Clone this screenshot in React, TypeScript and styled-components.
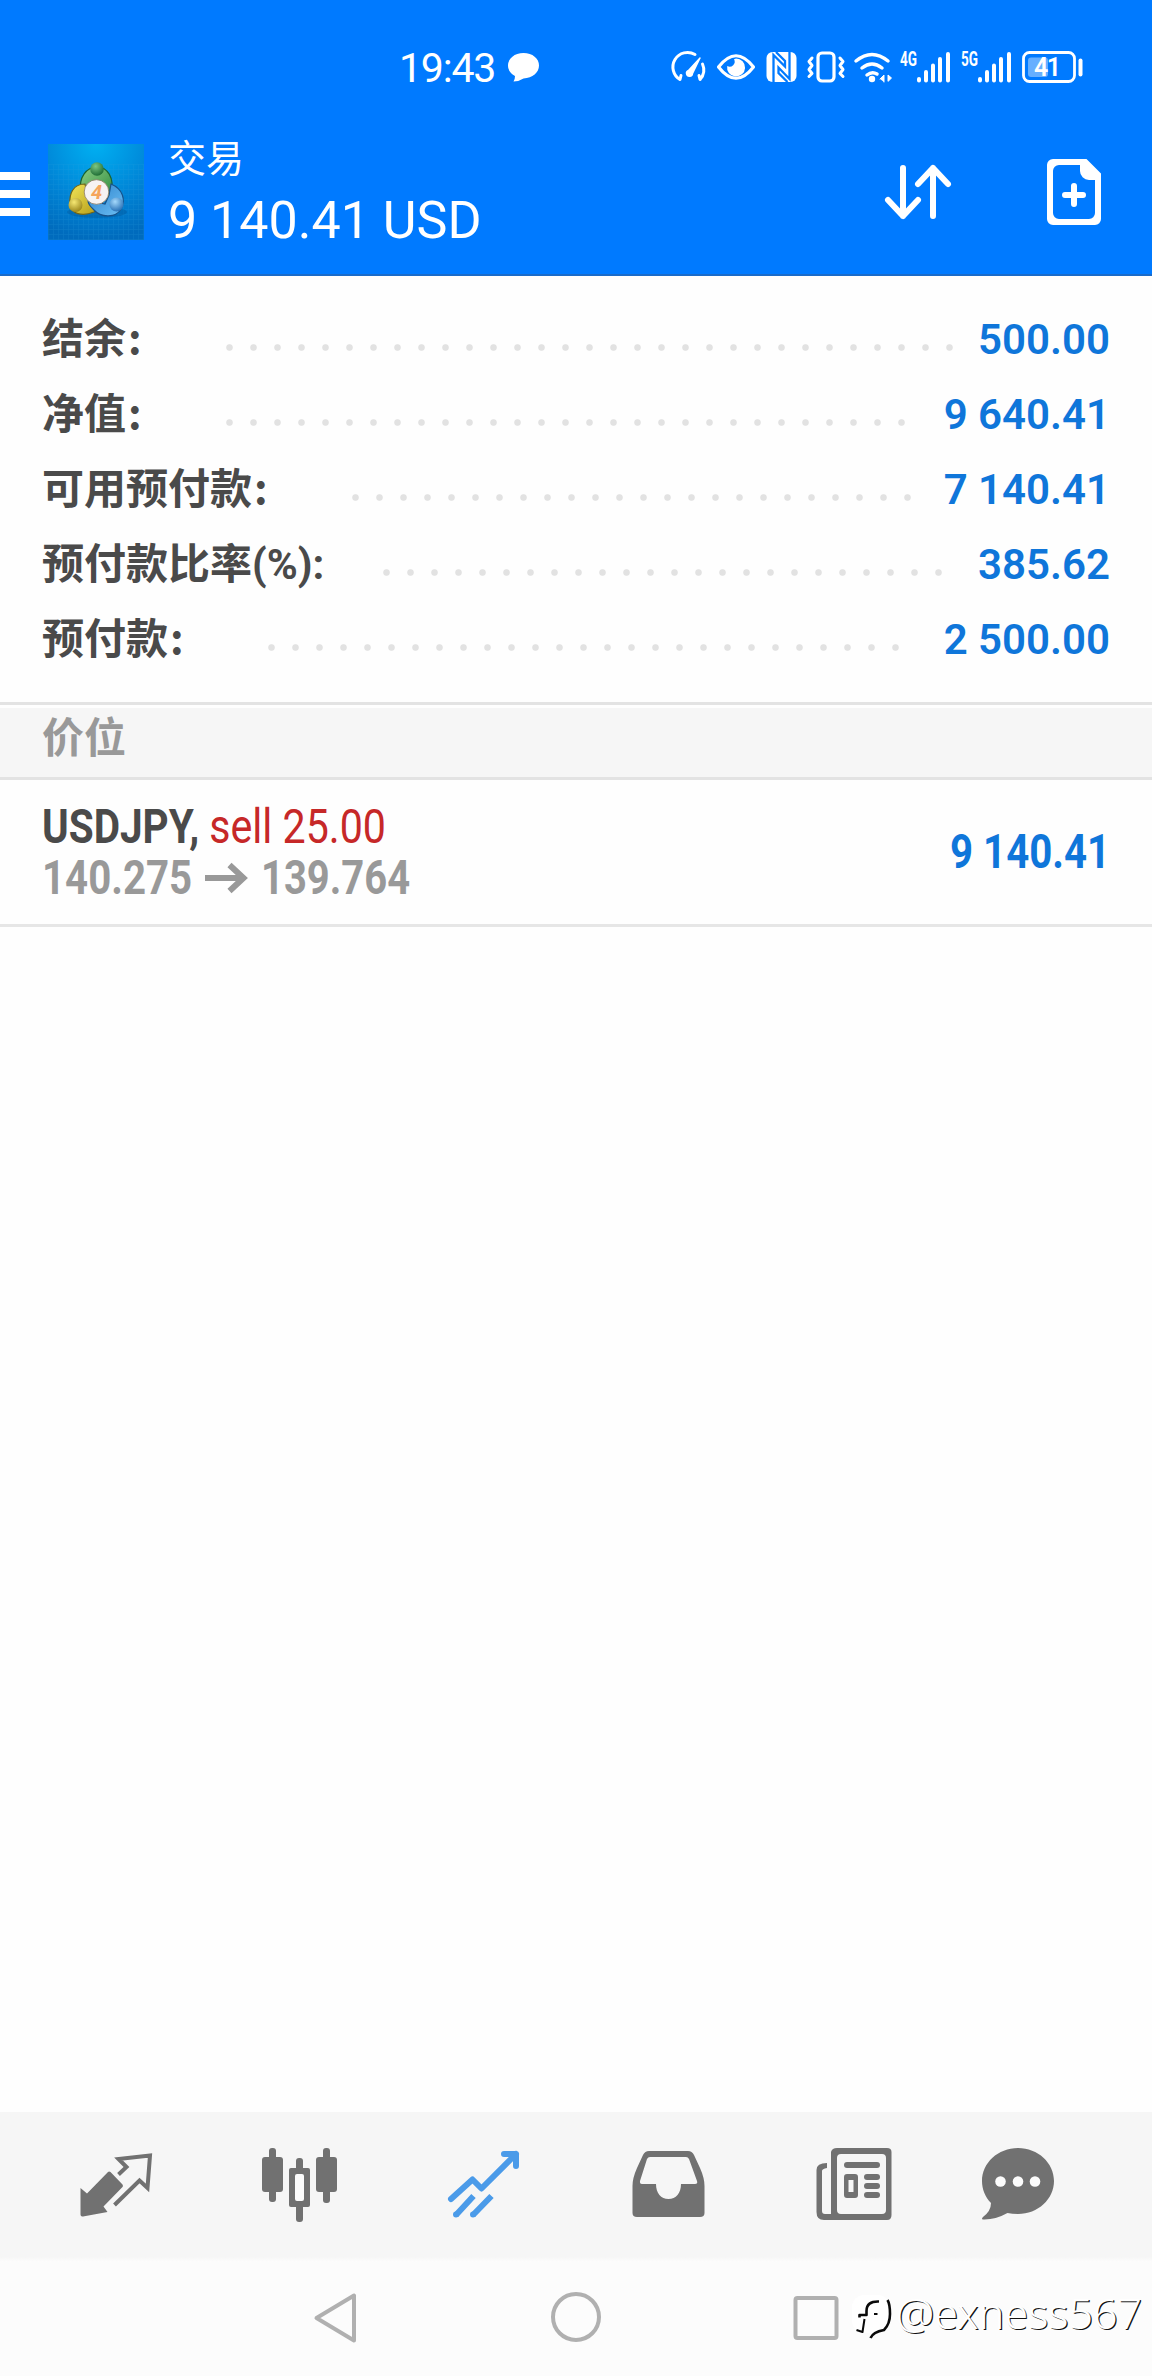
import React, { useLayoutEffect, useRef, useState } from "react";
import styled, { createGlobalStyle } from "styled-components";

const GlobalStyle = createGlobalStyle`
  * { box-sizing: border-box; }
  body { margin: 0; background: #fefefe; }
`;

const Screen = styled.div`
  width: 1152px;
  height: 2376px;
  display: flex;
  flex-direction: column;
  overflow: hidden;
  background: #fefefe;
  font-family: Roboto, "Noto Sans CJK SC", sans-serif;
`;

const Top = styled.header`
  height: 276px;
  flex: none;
  background: #007aff;
  border-bottom: 2px solid #1a6bc9;
  color: #fff;
`;

const StatusBar = styled.div`
  height: 134px;
  display: flex;
  align-items: flex-start;
`;

const Clock = styled.div`
  margin-left: 399px;
  width: 109px;
  padding-top: 44px;
  font-size: 41px;
  line-height: 48px;
  letter-spacing: -1.2px;
  font-weight: 450;
`;

const Drawing = styled.svg`
  display: block;
  flex: none;
`;

const AppBar = styled.div`
  height: 140px;
  display: flex;
`;

const MenuButton = styled.div`
  width: 30px;
  padding-top: 38px;
  display: flex;
  flex-direction: column;
  gap: 10px;
`;

const MenuLine = styled.div`
  height: 8px;
  background: #fff;
`;

const LogoBox = styled.div`
  margin: 10px 0 0 18px;
  width: 96px;
  height: 96px;
`;

const Heading = styled.div`
  margin-left: 24px;
  width: 692px;
`;

const Title = styled.div`
  padding-top: 1px;
  font-size: 38px;
  line-height: 48px;
  height: 49px;
`;

const Balance = styled.div`
  margin-top: 8px;
  font-size: 52px;
  line-height: 60px;
  white-space: pre;
`;

const Summary = styled.section`
  flex: none;
  height: 426px;
  padding: 24px 42px 0 43px;
`;

const SummaryRow = styled.div`
  height: 75px;
  display: flex;
  align-items: center;
  color: #4a4a4a;
`;

const Label = styled.div<{ $width: number }>`
  width: ${(p) => p.$width}px;
  height: 64px;
  padding-top: 4px;
  text-indent: -1px;
  font-size: 42px;
  line-height: 60px;
  font-weight: 700;
  white-space: nowrap;
`;

const Colon = styled.span`
  margin-left: 2px;
  line-height: 1px;
  font-family: "Noto Sans CJK SC", sans-serif;
`;

const Leader = styled.div<{ $dots: number }>`
  width: ${(p) => p.$dots * 24 - 12}px;
  height: 7px;
  margin: 19px 0 0 -1px;
  background: radial-gradient(circle at 3.5px 3.5px, #e2e2e2 2.8px, transparent 3.8px) 0 0 / 24px 7px repeat-x;
`;

const Amount = styled.div`
  margin-left: auto;
  padding-top: 4px;
  font-size: 42px;
  line-height: 60px;
  font-weight: 600;
  color: #0f76da;
  white-space: nowrap;
`;

const SectionTitle = styled.div`
  flex: none;
  height: 78px;
  border-top: 3px solid #e3e3e3;
  border-bottom: 3px solid #e3e3e3;
  padding: 3px 0 0;
`;

const SectionFill = styled.div`
  height: 69px;
  padding: 2px 0 0 42px;
  background: #f6f6f6;
  color: #999;
  font-size: 42px;
  line-height: 58px;
  font-weight: 700;
`;

const Position = styled.div`
  flex: none;
  height: 147px;
  padding: 21px 42px 0 42px;
  border-bottom: 3px solid #e6e6e6;
  display: flex;
  justify-content: space-between;
`;

const Lines = styled.div`
  display: flex;
  flex-direction: column;
`;

const Line = styled.div`
  height: 51px;
  display: flex;
  align-items: center;
`;

const Profit = styled.div`
  padding-top: 26px;
`;

const Fitted = styled.div<{ $color: string; $weight: number; $size: number }>`
  height: 50px;
  flex: none;
  color: ${(p) => p.$color};
  font-size: ${(p) => p.$size}px;
  line-height: 50px;
  font-weight: ${(p) => p.$weight};
  white-space: pre;
`;

const FittedInner = styled.span`
  display: inline-block;
  transform-origin: 0 50%;
`;

/* Condensed text: squeezes the line horizontally into the given width. */
function Condensed(props: { width: number; color: string; weight?: number; size?: number; children: string }) {
  const ref = useRef<HTMLSpanElement>(null);
  const [scale, setScale] = useState(1);
  useLayoutEffect(() => {
    if (ref.current) setScale(props.width / ref.current.offsetWidth);
  }, [props.width]);
  return (
    <Fitted $color={props.color} $weight={props.weight ?? 700} $size={props.size ?? 48} style={{ width: props.width }}>
      <FittedInner ref={ref} style={{ transform: `scaleX(${scale})` }}>
        {props.children}
      </FittedInner>
    </Fitted>
  );
}

const Spacer = styled.div`
  flex: 1;
`;

const Tabs = styled.nav`
  flex: none;
  height: 150px;
  padding: 0 24px;
  display: flex;
  background: linear-gradient(#f6f6f6 145px, #fdfdfd 150px);
`;

const SystemBar = styled.footer`
  flex: none;
  height: 114px;
  display: flex;
  background: #fcfcfc;
`;

const Watermark = styled.div`
  display: flex;
  padding-top: 26px;
  white-space: nowrap;
  font-family: "Noto Sans", sans-serif;
  text-shadow: 1.2px 1.2px 0 #111;
`;

function StatusIcons() {
  return (
    <Drawing width="440" height="110" viewBox="660 0 440 110" fill="none" stroke="#fff" strokeLinecap="round" strokeLinejoin="round">
      <path d="M680 79.500A14.500 14.500 0 0 1 695 54.500M702.500 64A14.500 14.500 0 0 1 700 79.500M680 79.500l1-4M700 79.500l-1-4" strokeWidth="3" />
      <path d="M700 58L692.500 73.500a3 3 0 1 1-4-3Z" fill="#fff" strokeWidth="1.500" />
      <path d="M718.500 67Q736 44.500 753.500 67Q736 89.500 718.500 67Z" strokeWidth="3.200" />
      <path d="M736 58.500a9 9 0 1 1-8.800 7.500a5 5 0 0 0 6.800-6.800Z" fill="#fff" stroke="none" />
      <rect x="766.500" y="52" width="30" height="30" rx="6" fill="#fff" stroke="none" />
      <path d="M773.500 82V55L785 66.500 785 61 776 52M789.500 52V79L778.500 67.500 778.500 73 787.500 82" stroke="#007aff" strokeWidth="2.300" strokeLinecap="butt" strokeLinejoin="miter" />
      <rect x="818" y="53" width="16" height="28" rx="4" strokeWidth="3.200" />
      <path d="M812 58l-3 3.500 3 4-3 4 3 4-3 3M840 58l3 3.500-3 4 3 4-3 4 3 3" strokeWidth="3" />
      <path d="M856 61Q872 48 888 61M862 68Q872 60 882 68M867 75Q872 71 877 74" strokeWidth="3.500" />
      <circle cx="872" cy="79" r="3.200" fill="#fff" stroke="none" />
      <path d="M880 79l4-4v7M888 81V75l3.500 3-3 3" fill="#fff" strokeWidth="1" />
      <path d="M919 79v1.500M926 72v8.500M933 65.500v15M940 59v21.500M948 54v26.500M980 79v1.500M987 72v8.500M994 65.500v15M1001 59v21.500M1009 54v26.500" strokeWidth="4" />
      <g fill="#fff" stroke="none" fontFamily="Roboto, sans-serif" fontWeight="700" fontSize="20">
        <text x="900" y="66" textLength="17" lengthAdjust="spacingAndGlyphs">4G</text>
        <text x="961" y="66" textLength="17" lengthAdjust="spacingAndGlyphs">5G</text>
      </g>
      <rect x="1023.500" y="52.500" width="51" height="29" rx="6" strokeWidth="2.800" />
      <rect x="1028" y="57.500" width="20" height="19.500" rx="3" fill="#66afff" stroke="none" />
      <path d="M1080.500 60.500v14" strokeWidth="4" />
      <text x="1034" y="76" fill="#fff" stroke="none" fontFamily="Roboto, sans-serif" fontWeight="600" fontSize="25" textLength="27">41</text>
    </Drawing>
  );
}

function AppLogo() {
  return (
    <Drawing width="96" height="96" viewBox="0 0 96 96">
      <defs>
        <radialGradient id="bg" cx="0.5" cy="0" r="1">
          <stop offset="0" stopColor="#00b0f2" />
          <stop offset="0.6" stopColor="#0084d6" />
          <stop offset="1" stopColor="#006bbd" />
        </radialGradient>
        <linearGradient id="green" x1="0" y1="0" x2="1" y2="1">
          <stop offset="0" stopColor="#8fce86" />
          <stop offset="1" stopColor="#2b8a3c" />
        </linearGradient>
        <linearGradient id="yellow" x1="0" y1="0" x2="1" y2="1">
          <stop offset="0" stopColor="#f2e65a" />
          <stop offset="1" stopColor="#b39a16" />
        </linearGradient>
        <linearGradient id="blue" x1="0" y1="0" x2="1" y2="1">
          <stop offset="0" stopColor="#2b7fc9" />
          <stop offset="1" stopColor="#6cc0f5" />
        </linearGradient>
        <radialGradient id="gball" cx="0.4" cy="0.3" r="0.8"><stop offset="0" stopColor="#7cc783" /><stop offset="1" stopColor="#12602a" /></radialGradient>
        <radialGradient id="yball" cx="0.4" cy="0.3" r="0.8"><stop offset="0" stopColor="#f6e873" /><stop offset="1" stopColor="#8f7a10" /></radialGradient>
        <radialGradient id="bball" cx="0.4" cy="0.3" r="0.8"><stop offset="0" stopColor="#a4d8fb" /><stop offset="1" stopColor="#1763ad" /></radialGradient>
        <pattern id="grid" width="5" height="5" patternUnits="userSpaceOnUse">
          <path d="M0 .5H5M.5 0V5" stroke="#2fa0dc" strokeWidth=".6" opacity=".25" />
        </pattern>
      </defs>
      <rect width="96" height="96" fill="url(#bg)" />
      <rect y="20" width="96" height="76" fill="url(#grid)" />
      <ellipse cx="49" cy="68" rx="30" ry="6" fill="#004f8f" opacity=".35" />
      <path d="M33 48C30 33 39 23 49 23S67 33 63 50L58 55 49 38 41 43Z" fill="url(#green)" stroke="#1b6330" strokeWidth="1.200" />
      <path d="M37 40C25 40 21 50 22 60S34 73 46 68L51 61 40 54Z" fill="url(#yellow)" stroke="#6f6419" strokeWidth="1.200" />
      <path d="M63 40C75 45 78 56 73 65S53 74 46 66C42 62 40 60 40 56L57 60 61 51Z" fill="url(#blue)" stroke="#17528a" strokeWidth="1.200" />
      <circle cx="49" cy="25" r="6.800" fill="url(#gball)" />
      <circle cx="27.500" cy="61" r="7" fill="url(#yball)" />
      <circle cx="68.500" cy="60.500" r="7" fill="url(#bball)" />
      <circle cx="48.500" cy="48" r="12.300" fill="#f7f3f2" stroke="#8c7b62" strokeWidth=".8" />
      <text x="48.500" y="55" textAnchor="middle" fontFamily="Roboto, sans-serif" fontWeight="700" fontStyle="italic" fontSize="20" fill="#f5a55c">4</text>
    </Drawing>
  );
}

const rows = [
  { label: "结余", width: 183.5, dots: 31, value: "500.00" },
  { label: "净值", width: 183.5, dots: 29, value: "9 640.41" },
  { label: "可用预付款", width: 309.5, dots: 24, value: "7 140.41" },
  { label: "预付款比率(%):", width: 340.5, dots: 24, value: "385.62" },
  { label: "预付款", width: 225.5, dots: 27, value: "2 500.00" },
];

const GREY = "#717171";

export default function App() {
  return (
    <Screen>
      <GlobalStyle />
      <Top>
        <StatusBar>
          <Clock>19:43</Clock>
          <Drawing width="152" height="110" viewBox="508 0 152 110">
            <path d="M523.500 53C532.500 53 539 58.500 539 65.500S532.500 78 523.500 78.500Q519 81.500 513.500 81.500Q515 79.500 515 76C510.500 73.500 508 70 508 65.500C508 58.500 514.500 53 523.500 53Z" fill="#fff" />
          </Drawing>
          <StatusIcons />
        </StatusBar>
        <AppBar>
          <MenuButton><MenuLine /><MenuLine /><MenuLine /></MenuButton>
          <LogoBox><AppLogo /></LogoBox>
          <Heading>
            <Title>交易</Title>
            <Balance>9 140.41 USD</Balance>
          </Heading>
          <Drawing width="292" height="140" viewBox="860 134 292 140" fill="none" stroke="#fff" strokeWidth="6" strokeLinecap="round" strokeLinejoin="round">
            <path d="M903 168v48M888 200l15 16 15-16M933 216v-48M918 184l15-16 15 16" />
            <path d="M1053 159h33.500l14.500 14.500V219a6 6 0 0 1-6 6h-42a6 6 0 0 1-6-6v-54a6 6 0 0 1 6-6Zm6 6a6 6 0 0 0-6 6v42a6 6 0 0 0 6 6h30a6 6 0 0 0 6-6v-33h-6a9 9 0 0 1-9-9v-6Z" fill="#fff" fillRule="evenodd" stroke="none" />
            <path d="M1065 195h18M1074 186v18" />
          </Drawing>
        </AppBar>
      </Top>

      <Summary>
        {rows.map((r) => (
          <SummaryRow key={r.label}>
            <Label $width={r.width}>
              {r.label}
              {!r.label.endsWith(":") && <Colon>:</Colon>}
            </Label>
            <Leader $dots={r.dots} />
            <Amount>{r.value}</Amount>
          </SummaryRow>
        ))}
      </Summary>

      <SectionTitle><SectionFill>价位</SectionFill></SectionTitle>

      <Position>
        <Lines>
          <Line>
            <Condensed width={157} color="#4a4a4a">USDJPY,</Condensed>
            <Condensed width={187} color="#c62828" weight={400}> sell 25.00</Condensed>
          </Line>
          <Line>
            <Condensed width={150} color="#999">140.275</Condensed>
            <Drawing width="69" height="50" viewBox="192 852 69 50" fill="none" stroke="#999" strokeWidth="6">
              <path d="M205 877h38M229.500 864l14 13-14 13" />
            </Drawing>
            <Condensed width={149} color="#999">139.764</Condensed>
          </Line>
        </Lines>
        <Profit><Condensed width={160} color="#0f76da">9 140.41</Condensed></Profit>
      </Position>

      <Spacer />

      <Tabs>
        <Drawing width="184" height="146" viewBox="24 2112 184 146" fill={GREY}>
          <path d="M80.500 2188L87 2193.500 108 2172Q109 2171 110.500 2172L122.500 2184.500Q123.500 2186 122.500 2187L103.500 2206.500 107.500 2212 83 2216.500Q80.500 2217 80.500 2214.500Z" />
          <path d="M118.500 2174.500L126.500 2167 118.500 2159 150 2155.500 147.500 2188 139.500 2180.500 114.500 2205" fill="none" stroke={GREY} strokeWidth="4" />
        </Drawing>
        <Drawing width="184" height="146" viewBox="208 2112 184 146" fill={GREY}>
          <rect x="262" y="2157" width="21" height="35" rx="3" />
          <rect x="269" y="2148" width="7" height="54" rx="3" />
          <rect x="316" y="2157" width="21" height="35" rx="3" />
          <rect x="323" y="2148" width="7" height="55" rx="3" />
          <rect x="296" y="2158" width="7" height="64" rx="3" />
          <rect x="289" y="2168" width="21" height="39" rx="2" />
          <rect x="295" y="2174" width="9" height="27" rx="2" fill="#fcfcfc" />
        </Drawing>
        <Drawing width="184" height="146" viewBox="392 2112 184 146" fill="none" stroke="#4b9be9" strokeWidth="6" strokeLinejoin="round">
          <path d="M451 2199L472.500 2179.500 481.500 2188.500 516 2154M504 2154H516V2166" strokeLinecap="round" />
          <path d="M473.500 2196L456 2215M491.500 2196L473 2215" />
          <path d="M456 2214.500h0M473 2214.500h0" strokeLinecap="round" />
        </Drawing>
        <Drawing width="184" height="146" viewBox="576 2112 184 146" fill={GREY}>
          <path fillRule="evenodd" d="M649 2151h39Q692 2151 694 2155L700 2168Q704.500 2178 704.500 2186V2213Q704.500 2217 700 2217H637Q632.500 2217 632.500 2213V2186Q632.500 2178 637 2168L643 2155Q645 2151 649 2151ZM650 2157Q648 2157 647 2159L640 2181Q639.500 2184 642 2184H656C656 2193 661 2199 668.500 2199S681 2193 681 2184H695Q698 2184 697 2181L689 2159Q688 2157 686 2157Z" />
        </Drawing>
        <Drawing width="184" height="146" viewBox="760 2112 184 146" fill={GREY}>
          <path fillRule="evenodd" d="M837 2148H887Q891.500 2148 891.500 2152V2215Q891.500 2220 887 2220H824Q816.500 2220 816.500 2212V2170Q816.500 2163 827 2163V2168Q822 2169 822 2171V2211Q822 2214 825 2214H831V2152Q832 2148 837 2148ZM841 2154Q837 2154 837 2158V2210Q837 2214 841 2214H882Q886 2214 886 2210V2158Q886 2154 882 2154Z" />
          <rect x="844" y="2162" width="36" height="6" rx="3" />
          <path fillRule="evenodd" d="M847 2174h8q3 0 3 3v18q0 3-3 3h-8q-3 0-3-3v-18q0-3 3-3ZM848.500 2180v12h5v-12Z" />
          <rect x="864" y="2174" width="16" height="6" rx="3" />
          <rect x="864" y="2183" width="16" height="6" rx="3" />
          <rect x="864" y="2192" width="16" height="6" rx="3" />
        </Drawing>
        <Drawing width="184" height="146" viewBox="944 2112 184 146" fill={GREY}>
          <path d="M1018 2148C1038 2148 1054 2163 1054 2181S1038 2214 1018 2214Q1012 2214 1007.500 2213Q995 2220 983 2219.500Q981 2219 983 2217Q991 2211 991 2203C985 2197 982 2189 982 2181C982 2163 998 2148 1018 2148Z" />
          <g fill="#fcfcfc"><circle cx="1000.500" cy="2181.500" r="5.300" /><circle cx="1018" cy="2181.500" r="5.300" /><circle cx="1035" cy="2181.500" r="5.300" /></g>
        </Drawing>
      </Tabs>

      <SystemBar>
        <Drawing width="896" height="114" viewBox="0 2262 896 114" fill="none" stroke="#b0b0b0" strokeWidth="4" strokeLinejoin="round">
          <path d="M316.500 2318L354 2295.500V2340.500Z" />
          <circle cx="576" cy="2317" r="23" />
          <rect x="795.500" y="2298" width="41" height="40" rx="2" />
          <rect x="852" y="2295" width="38" height="38" rx="12" fill="#fff" stroke="none" />
          <g stroke="#0a0a0a" strokeLinecap="butt">
            <path d="M879 2301.500Q866.500 2301 866.500 2311V2315H859.500V2317.500" strokeWidth="2.600" />
            <path d="M864.500 2319L862.500 2332 856.500 2330" strokeWidth="2" />
            <path d="M887.500 2300Q890 2304 890 2314T884 2330Q873 2332 870.500 2338" strokeWidth="2.600" />
            <path d="M874 2314h3.500" strokeWidth="2" />
          </g>
        </Drawing>
        <Watermark><Condensed width={246} color="#fff" weight={300} size={43}>@exness567</Condensed></Watermark>
      </SystemBar>
    </Screen>
  );
}
